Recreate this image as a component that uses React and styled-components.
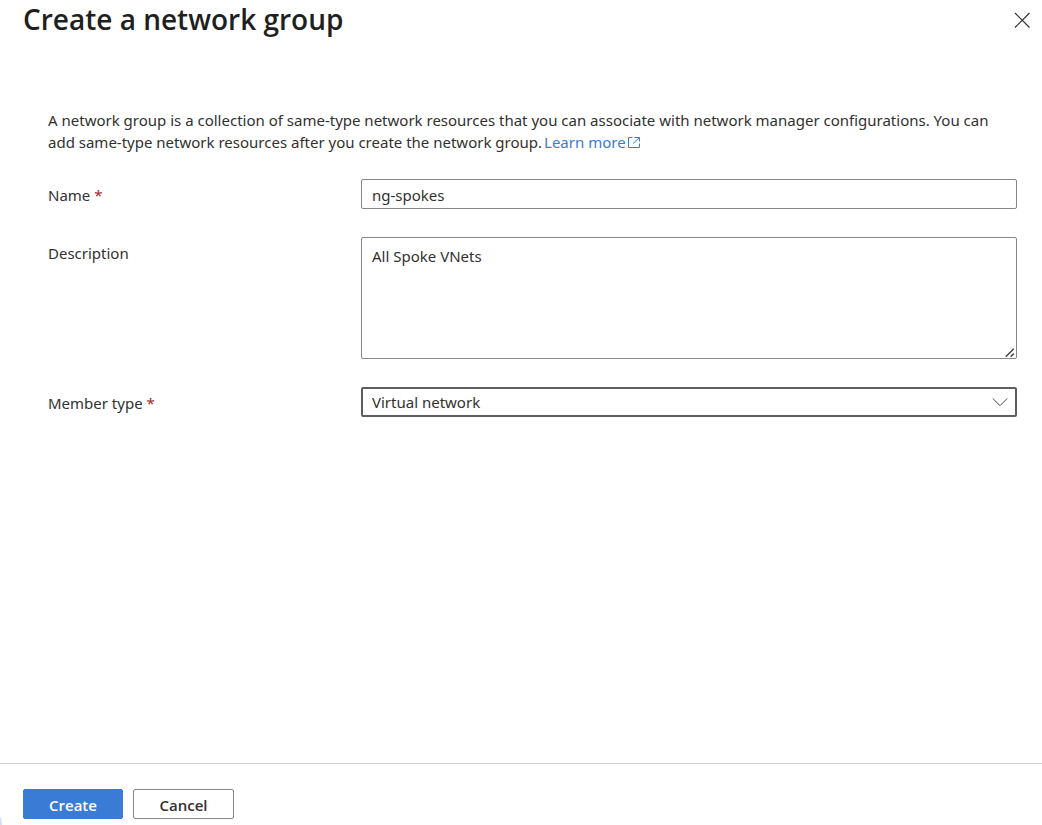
import React, { useState } from "react";
import styled, { createGlobalStyle, css } from "styled-components";

const GlobalStyle = createGlobalStyle`
  *, *::before, *::after { box-sizing: border-box; }
  body {
    margin: 0;
    background: #fff;
    color: #323130;
    font-family: "Noto Sans", "Open Sans", sans-serif;
    font-size: 15px;
    line-height: 22px;
  }
`;

const Pane = styled.div`
  position: relative;
  display: flex;
  flex-direction: column;
  min-height: 100vh;
`;

const Header = styled.header`
  display: flex;
  align-items: flex-start;
  justify-content: space-between;
  padding: 0 8px 0 23px;
`;

const Title = styled.h1`
  margin: 0;
  font-family: "Open Sans", sans-serif;
  font-size: 28px;
  line-height: 38px;
  font-weight: 600;
  color: #1f1f1f;
`;

const CloseButton = styled.button`
  display: flex;
  margin-top: 8px;
  padding: 4px;
  border: 0;
  background: none;
  color: #323130;
  cursor: pointer;
`;

const Main = styled.main`
  flex: 1;
  padding: 71px 25px 28px 48px;
`;

const Intro = styled.p`
  margin: 0 0 26px;
`;

const Link = styled.a`
  display: inline-block;
  margin-left: 2px;
  color: #3a7bd5;
  text-decoration: none;
  white-space: nowrap;
  &:hover { text-decoration: underline; }
`;

const Form = styled.form`
  display: flex;
  flex-direction: column;
  gap: 28px;
`;

const Field = styled.div`
  display: grid;
  grid-template-columns: minmax(120px, 313px) minmax(0, 1fr);
  align-items: start;
`;

const Label = styled.label`
  padding-top: 5px;
`;

const Required = styled.span`
  color: #a4262c;
`;

const Control = styled.div`
  position: relative;
  display: flex;
`;

const boxStyle = css`
  width: 100%;
  margin: 0;
  border: 1px solid #868686;
  border-radius: 2px;
  background: #fff;
  color: #323130;
  font: inherit;
  outline: none;
`;

const TextInput = styled.input`
  ${boxStyle}
  height: 30px;
  padding: 2px 10px 0;
`;

const TextArea = styled.textarea`
  ${boxStyle}
  height: 122px;
  padding: 7px 10px;
  resize: vertical;
  &::-webkit-resizer { background: transparent; }
`;

const Select = styled.select`
  ${boxStyle}
  height: 30px;
  padding: 0 32px 0 9px;
  border: 2px solid #605e5c;
  appearance: none;
`;

const ResizeMark = styled.svg`
  position: absolute;
  right: 2px;
  bottom: 1px;
  pointer-events: none;
`;

const Chevron = styled.svg`
  position: absolute;
  right: 9px;
  top: 10px;
  pointer-events: none;
`;

const Footer = styled.footer`
  display: flex;
  gap: 10px;
  padding: 25px 23px 6px;
  border-top: 1px solid #d2d0ce;
`;

const Button = styled.button`
  min-width: ${(p) => (p.$primary ? "100px" : "101px")};
  height: 30px;
  padding: 2px 16px 0;
  border: 1px solid ${(p) => (p.$primary ? "#3a7bd5" : "#868686")};
  border-radius: 2px;
  background: ${(p) => (p.$primary ? "#3a7bd5" : "#fff")};
  color: ${(p) => (p.$primary ? "#fff" : "#323130")};
  font-family: "Open Sans", sans-serif;
  font-size: 15px;
  font-weight: 600;
  line-height: 20px;
  cursor: pointer;
`;

const Corner = styled.span`
  position: absolute;
  left: 0;
  bottom: 0;
  width: 2px;
  height: 8px;
  border-top-right-radius: 2px 8px;
  background: #d6e0f8;
`;

function ExternalIcon() {
  return (
    <svg width="14" height="12" viewBox="0 0 14 12" fill="none" stroke="currentColor" aria-hidden="true">
      <path d="M6.500 1.500H2.500V11.500H13.500V7.500M8.500 1.500H13.500V5.500M13.300 1.700L7 7.500" />
    </svg>
  );
}

export default function App() {
  const [name, setName] = useState("ng-spokes");
  const [description, setDescription] = useState("All Spoke VNets");

  return (
    <Pane>
      <GlobalStyle />
      <Header>
        <Title>Create a network group</Title>
        <CloseButton type="button" aria-label="Close">
          <svg width="16" height="16" viewBox="0 0 16 16" fill="none" stroke="currentColor" strokeWidth="1.200">
            <path d="M1 1L15.500 15.500M15.500 1L1 15.500" />
          </svg>
        </CloseButton>
      </Header>

      <Main>
        <Intro>
          A network group is a collection of same-type network resources that you can associate with
          network manager configurations. You can add same-type network resources after you create the
          network group.
          <Link href="#learn-more">
            Learn more
            <ExternalIcon />
          </Link>
        </Intro>

        <Form id="network-group" onSubmit={(e) => e.preventDefault()}>
          <Field>
            <Label htmlFor="name">
              Name <Required>*</Required>
            </Label>
            <Control>
              <TextInput id="name" type="text" required value={name} onChange={(e) => setName(e.target.value)} />
            </Control>
          </Field>
          <Field>
            <Label htmlFor="description">Description</Label>
            <Control>
              <TextArea
                id="description"
                value={description}
                onChange={(e) => setDescription(e.target.value)}
              />
              <ResizeMark width="10" height="10" viewBox="0 0 10 10" fill="none" stroke="#484644" strokeWidth="1.500">
                <path d="M.8 8.800L8.800 .8M5.600 8.800L8.800 5.600" />
              </ResizeMark>
            </Control>
          </Field>
          <Field>
            <Label htmlFor="member-type">
              Member type <Required>*</Required>
            </Label>
            <Control>
              <Select id="member-type" required defaultValue="vnet">
                <option value="vnet">Virtual network</option>
                <option value="subnet">Subnet</option>
              </Select>
              <Chevron width="16" height="10" viewBox="0 0 16 10" fill="none" stroke="#484644">
                <path d="M.8 1.500L8 8.700L15.200 1.500" />
              </Chevron>
            </Control>
          </Field>
        </Form>
      </Main>

      <Footer>
        <Button type="submit" form="network-group" $primary>
          Create
        </Button>
        <Button type="button">Cancel</Button>
      </Footer>
      <Corner />
    </Pane>
  );
}
